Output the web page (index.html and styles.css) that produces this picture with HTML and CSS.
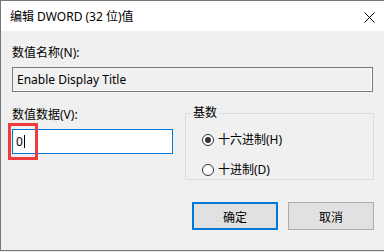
FILE: index.html
```html
<!DOCTYPE html>
<html lang="zh-CN">
<head>
<meta charset="utf-8">
<title>编辑 DWORD (32 位)值</title>
<link rel="stylesheet" href="styles.css">
</head>
<body>
<div class="window">
  <div class="titlebar">
    <span class="title">编辑 DWORD (32 位)值</span>
    <span class="close">
      <svg width="11" height="11" viewBox="0 0 11 11"><path d="M0.5 0.5 L10.5 10.5 M10.5 0.5 L0.5 10.5" stroke="#000" stroke-width="1" fill="none"/></svg>
    </span>
  </div>
  <div class="content">
    <div class="label">数值名称(N):</div>
    <div class="field readonly">Enable Display Title</div>
    <div class="row">
      <div class="col">
        <div class="label">数值数据(V):</div>
        <div class="field active">0<span class="caret"></span></div>
        <div class="highlight"></div>
      </div>
      <fieldset class="group">
        <legend>基数</legend>
        <div class="radio"><span class="dot checked"></span>十六进制(H)</div>
        <div class="radio"><span class="dot"></span>十进制(D)</div>
      </fieldset>
    </div>
    <div class="buttons">
      <div class="btn default">确定</div>
      <div class="btn">取消</div>
    </div>
  </div>
</div>
</body>
</html>
```
FILE: styles.css
```css
html, body {
  margin: 0;
  padding: 0;
  background: #e8e8e8;
}
body {
  width: 384px;
  height: 252px;
  overflow: hidden;
  font-family: "Noto Sans", "Noto Sans CJK SC", sans-serif;
  font-size: 12px;
  color: #000;
}
.window {
  width: 400px;
  height: 249px;
  border-top: 1px solid #777;
  border-left: 1px solid #777;
  border-bottom: 1px solid #777;
  background: #f0f0f0;
}
.titlebar {
  height: 30px;
  background: #fff;
  display: flex;
  align-items: center;
  padding-left: 9px;
}
.title {
  flex: 1;
  line-height: 16px;
  padding-top: 2px;
}
.close {
  width: 11px;
  height: 11px;
  margin-right: 26px;
  display: flex;
  margin-top: 2px;
}
.content {
  padding: 14px 0 0 11px;
  width: 362px;
}
.label {
  line-height: 16px;
}
.field {
  height: 23px;
  line-height: 23px;
  padding-left: 3px;
  box-sizing: content-box;
}
.readonly {
  margin-top: 6px;
  width: 355px;
  border: 1px solid #7a7a7a;
  box-shadow: inset -1px -1px 0 #fff;
  background: #f0f0f0;
  padding-left: 4px;
}
.row {
  display: flex;
  gap: 12px;
  margin-top: 15px;
}
.col {
  position: relative;
  width: 161px;
}
.active {
  margin-top: 6px;
  width: 156px;
  border: 1px solid #0078d7;
  background: #fff;
}
.caret {
  display: inline-block;
  width: 1px;
  height: 13px;
  background: #000;
  vertical-align: -2px;
  margin-left: 1px;
}
.highlight {
  position: absolute;
  left: -4px;
  top: 16px;
  width: 24px;
  height: 31px;
  border: 3px solid #ee3b3b;
}
.group {
  margin: 0;
  padding: 0 0 0 5px;
  width: 182px;
  height: 71px;
  border: 1px solid #dcdcdc;
}
.group legend {
  padding: 0 2px;
  line-height: 12px;
}
.radio {
  display: flex;
  align-items: center;
  height: 16px;
  margin-left: 11px;
  margin-top: 13px;
  line-height: 16px;
}
.radio + .radio {
  margin-top: 14px;
}
.dot {
  border: 1px solid #333;
  border-radius: 50%;
  background: #fff;
  margin-right: 4px;
  display: flex;
  align-items: center;
  justify-content: center;
  box-sizing: border-box;
  width: 12px;
  height: 12px;
}
.dot.checked::after {
  content: "";
  width: 6px;
  height: 6px;
  border-radius: 50%;
  background: #333;
}
.buttons {
  display: flex;
  justify-content: flex-end;
  gap: 10px;
  margin-top: 22px;
}
.btn {
  width: 84px;
  height: 26px;
  border: 1px solid #adadad;
  background: #e1e1e1;
  display: flex;
  align-items: center;
  justify-content: center;
  font-family: "Noto Sans CJK SC", sans-serif;
}
.btn.default {
  border: 2px solid #0078d7;
  width: 82px;
  height: 24px;
}
```
